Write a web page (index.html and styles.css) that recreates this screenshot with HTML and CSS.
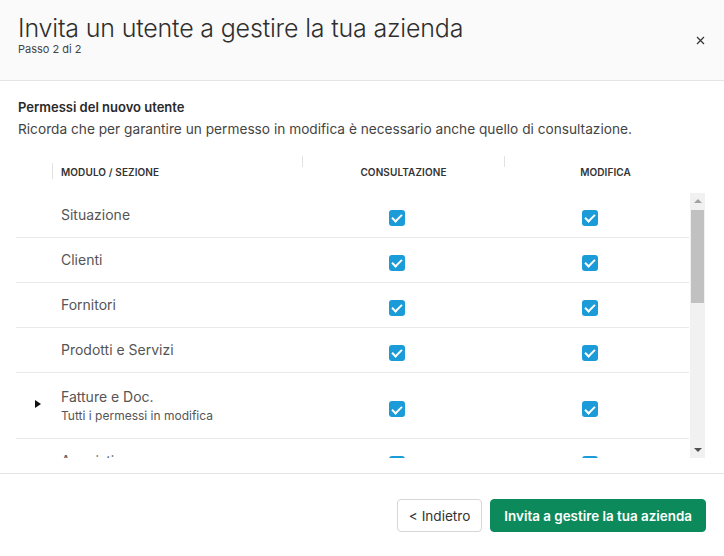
FILE: index.html
```html
<!DOCTYPE html>
<html lang="it">
<head>
<meta charset="utf-8">
<title>Invita un utente</title>
<link rel="stylesheet" href="styles.css">
</head>
<body>
<div class="modal">
  <header class="modal-header">
    <div class="titles">
      <h1 class="title">Invita un utente a gestire la tua azienda</h1>
      <div class="subtitle">Passo 2 di 2</div>
    </div>
    <button class="close" aria-label="Chiudi">
      <svg width="9" height="9" viewBox="0 0 9 9"><path d="M1 1L8 8M8 1L1 8" stroke="#333" stroke-width="1.2" fill="none"/></svg>
    </button>
  </header>

  <main class="modal-body">
    <div class="intro">
      <div class="intro-title">Permessi del nuovo utente</div>
      <div class="intro-text">Ricorda che per garantire un permesso in modifica è necessario anche quello di consultazione.</div>
    </div>

    <div class="table">
      <div class="thead">
        <div class="th th-exp"></div>
        <div class="th th-mod"><span class="sep sep-low"></span><span class="th-label">Modulo / Sezione</span></div>
        <div class="th th-col"><span class="sep sep-high"></span><span class="th-label th-center">Consultazione</span></div>
        <div class="th th-col"><span class="sep sep-high"></span><span class="th-label th-center">Modifica</span></div>
      </div>

      <div class="tbody-wrap">
        <div class="tbody">
          <div class="row">
            <div class="cell exp"></div>
            <div class="cell name"><div class="name-main">Situazione</div></div>
            <div class="cell chk"><span class="cb"></span></div>
            <div class="cell chk"><span class="cb"></span></div>
          </div>
          <div class="row">
            <div class="cell exp"></div>
            <div class="cell name"><div class="name-main">Clienti</div></div>
            <div class="cell chk"><span class="cb"></span></div>
            <div class="cell chk"><span class="cb"></span></div>
          </div>
          <div class="row">
            <div class="cell exp"></div>
            <div class="cell name"><div class="name-main">Fornitori</div></div>
            <div class="cell chk"><span class="cb"></span></div>
            <div class="cell chk"><span class="cb"></span></div>
          </div>
          <div class="row">
            <div class="cell exp"></div>
            <div class="cell name"><div class="name-main">Prodotti e Servizi</div></div>
            <div class="cell chk"><span class="cb"></span></div>
            <div class="cell chk"><span class="cb"></span></div>
          </div>
          <div class="row row-tall">
            <div class="cell exp"><span class="caret"></span></div>
            <div class="cell name"><div class="name-main">Fatture e Doc.</div><div class="name-sub">Tutti i permessi in modifica</div></div>
            <div class="cell chk"><span class="cb"></span></div>
            <div class="cell chk"><span class="cb"></span></div>
          </div>
          <div class="row">
            <div class="cell exp"></div>
            <div class="cell name"><div class="name-main">Acquisti</div></div>
            <div class="cell chk"><span class="cb"></span></div>
            <div class="cell chk"><span class="cb"></span></div>
          </div>
        </div>
        <div class="scrollbar">
          <span class="arrow arrow-up"></span>
          <div class="track"><div class="thumb"></div></div>
          <span class="arrow arrow-down"></span>
        </div>
      </div>
    </div>
  </main>

  <footer class="modal-footer">
    <button class="btn btn-back">&lt; Indietro</button>
    <button class="btn btn-primary">Invita a gestire la tua azienda</button>
  </footer>
</div>
</body>
</html>
```

FILE: styles.css
```css
* { box-sizing: border-box; }
html, body { margin: 0; padding: 0; }
body {
  width: 724px;
  height: 556px;
  overflow: hidden;
  font-family: Inter, "Noto Sans", sans-serif;
  color: #333;
  background: #fff;
}
.modal { display: flex; flex-direction: column; height: 556px; }

.modal-header {
  height: 81px;
  flex: none;
  background: #fafafa;
  border-bottom: 1px solid #e4e4e4;
  display: flex;
  align-items: flex-start;
  justify-content: space-between;
  padding: 13px 18px 0 18px;
}
.title {
  margin: 0;
  font-size: 25px;
  font-weight: 300;
  line-height: 30px;
  color: #2f2f2f;
  letter-spacing: -0.18px;
}
.subtitle { font-size: 11px; line-height: 13px; color: #444; }
.close {
  border: 0; background: none; padding: 0; margin: 22px 1px 0 0;
  width: 10px; height: 10px; display: flex; align-items: center; justify-content: center;
}

.modal-body { flex: 1; padding: 18px 0 0 0; display: flex; flex-direction: column; }
.intro { padding: 0 18px; }
.intro-title { font-size: 13px; font-weight: 600; line-height: 16px; color: #2a2a2a; }
.intro-text { font-size: 13.7px; line-height: 22px; color: #444; margin-top: 3px; }

.table { margin: 16px 18px 0 16px; }
.thead {
  display: grid;
  grid-template-columns: 36px 250px 202px 202px;
  height: 37px;
  align-items: stretch;
}
.th { display: flex; font-size: 10px; font-weight: 600; text-transform: uppercase; color: #333; letter-spacing: 0.1px; }
.sep { width: 1px; background: #e2e2e2; flex: none; }
.sep-low { height: 16px; margin-top: 7px; margin-right: 8px; }
.sep-high { height: 11px; margin-top: 0; }
.th-label { padding-top: 10px; line-height: 12px; }
.th-center { flex: 1; text-align: center; }

.tbody-wrap { display: flex; height: 265px; }
.tbody { width: 673px; overflow: hidden; }
.row {
  display: grid;
  grid-template-columns: 36px 248px 193px 193px;
  height: 45px;
  border-bottom: 1px solid #e9e9e9;
  align-items: center;
}
.row-tall { height: 66px; }
.cell { display: flex; }
.exp { justify-content: center; padding-left: 8px; }
.name { flex-direction: column; padding-left: 9px; }
.name-main { font-size: 14px; line-height: 18px; color: #555; }
.name-sub { font-size: 12px; line-height: 16px; color: #555; margin-top: 2px; }
.chk { justify-content: center; padding-top: 5px; }
.row-tall .chk { padding-top: 7px; }
.cb {
  width: 16px; height: 16px; border-radius: 3px; background: #1b9bd7;
  display: block; position: relative;
}
.cb::after {
  content: "";
  position: absolute;
  left: 5.5px; top: 2.5px;
  width: 4px; height: 8px;
  border: solid #fff;
  border-width: 0 2.5px 2.5px 0;
  transform: rotate(45deg);
}
.caret {
  width: 0; height: 0;
  border-left: 6px solid #111;
  border-top: 4.5px solid transparent;
  border-bottom: 4.5px solid transparent;
  margin-top: -4px;
}

.scrollbar {
  width: 15px; margin-left: 1px;
  background: #f1f1f1;
  display: flex; flex-direction: column; align-items: center;
}
.arrow { width: 0; height: 0; border-left: 4px solid transparent; border-right: 4px solid transparent; flex: none; }
.arrow-up { border-bottom: 4px solid #a3a3a3; margin: 6px 0 7px 0; }
.arrow-down { border-top: 4px solid #505050; margin: 6px 0 6px 0; }
.track { flex: 1; width: 100%; padding: 0 1px; }
.thumb { height: 93px; background: #c1c1c1; }

.modal-footer {
  height: 83px;
  flex: none;
  border-top: 1px solid #e4e4e4;
  display: flex;
  justify-content: flex-end;
  align-items: flex-start;
  gap: 8px;
  padding: 25px 18px 0 0;
}
.btn {
  font-family: Inter, "Noto Sans", sans-serif;
  height: 33px;
  border-radius: 4px;
  white-space: nowrap;
  cursor: pointer;
}
.btn-back { background: #fff; border: 1px solid #d6d6d6; color: #333; font-size: 13.6px; padding: 0 11px; }
.btn-primary { background: #0c8a5c; border: 1px solid #0c8a5c; color: #fff; font-weight: 600; font-size: 13.4px; padding: 0 13px; }
```
